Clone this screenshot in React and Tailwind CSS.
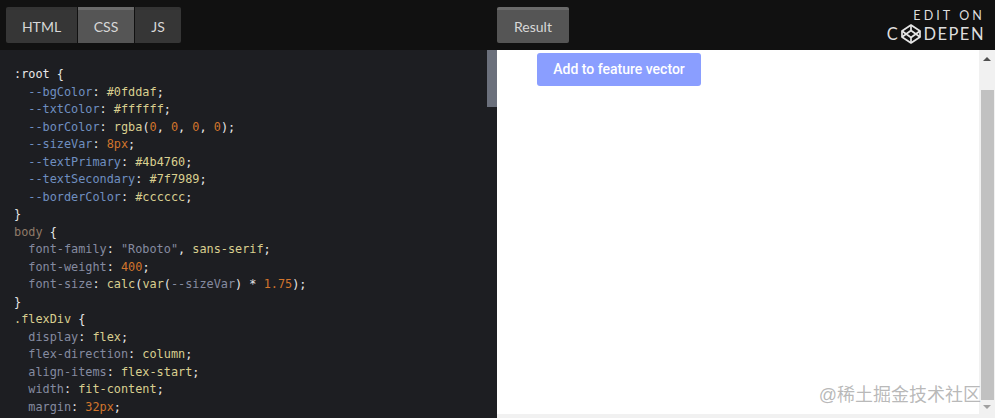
const c = {
  sel: "text-[#e8e8e8]",
  tag: "text-[#8f7a68]",
  v: "text-[#6f8fc0]",
  p: "text-[#858ba0]",
  val: "text-[#d9cf8f]",
  str: "text-[#d9cf8f]",
  num: "text-[#d2752c]",
  w: "text-[#e8e8e8]",
};

// each line is a list of [text, colour] pairs
const lines = [
  [[":root ", c.sel], ["{", c.w]],
  [["  --bgColor", c.v], [": ", c.w], ["#0fddaf", c.val], [";", c.w]],
  [["  --txtColor", c.v], [": ", c.w], ["#ffffff", c.val], [";", c.w]],
  [["  --borColor", c.v], [": ", c.w], ["rgba", c.val], ["(", c.w], ["0", c.num], [", ", c.w], ["0", c.num], [", ", c.w], ["0", c.num], [", ", c.w], ["0", c.num], [");", c.w]],
  [["  --sizeVar", c.v], [": ", c.w], ["8px", c.num], [";", c.w]],
  [["  --textPrimary", c.v], [": ", c.w], ["#4b4760", c.val], [";", c.w]],
  [["  --textSecondary", c.v], [": ", c.w], ["#7f7989", c.val], [";", c.w]],
  [["  --borderColor", c.v], [": ", c.w], ["#cccccc", c.val], [";", c.w]],
  [["}", c.w]],
  [["body ", c.tag], ["{", c.w]],
  [["  font-family", c.p], [": ", c.w], ['"Roboto"', c.p], [", ", c.w], ["sans-serif", c.val], [";", c.w]],
  [["  font-weight", c.p], [": ", c.w], ["400", c.num], [";", c.w]],
  [["  font-size", c.p], [": ", c.w], ["calc", c.val], ["(", c.w], ["var", c.val], ["(", c.w], ["--sizeVar", c.p], [") * ", c.w], ["1.75", c.num], [");", c.w]],
  [["}", c.w]],
  [[".flexDiv ", c.val], ["{", c.w]],
  [["  display", c.p], [": ", c.w], ["flex", c.val], [";", c.w]],
  [["  flex-direction", c.p], [": ", c.w], ["column", c.val], [";", c.w]],
  [["  align-items", c.p], [": ", c.w], ["flex-start", c.val], [";", c.w]],
  [["  width", c.p], [": ", c.w], ["fit-content", c.val], [";", c.w]],
  [["  margin", c.p], [": ", c.w], ["32px", c.num], [";", c.w]],
];

const tabBase =
  "flex h-9 items-center justify-center border-t-[3px] text-[14px] font-['Lato',sans-serif] text-[#d8d8d8]";

function CodepenMark() {
  return (
    <svg className="mx-[2px] shrink-0" width="20" height="20" viewBox="0 0 20 20" fill="none" stroke="#e6e6e6" strokeWidth="1.7" strokeLinejoin="round">
      <path d="M10 1 19 7V13L10 19 1 13V7Z" />
      <path d="M10 1V6.5M10 13.5V19M1 7 10 13.5 19 7M1 13 10 6.5 19 13" />
    </svg>
  );
}

export default function App() {
  return (
    <div className="flex h-[418px] w-[995px] flex-col overflow-hidden bg-[#111111]">
      <header className="flex h-[50px] shrink-0 items-start bg-[#111111] pt-[7px]">
        <div className="flex w-[497px] gap-px pl-[6px]">
          <div className={`${tabBase} w-[71px] rounded-l-[2px] border-[#333333] bg-[#363636]`}>HTML</div>
          <div className={`${tabBase} w-[56px] border-[#6a6a6a] bg-[#555555]`}>CSS</div>
          <div className={`${tabBase} w-[46px] rounded-r-[2px] border-[#333333] bg-[#363636]`}>JS</div>
        </div>
        <div className={`${tabBase} w-[72px] rounded-[2px] border-[#6a6a6a] bg-[#555555]`}>Result</div>
        <div className="ml-auto flex flex-col items-end pr-[10px] pt-px font-['Lato',sans-serif] text-[#dedede]">
          <span className="text-[12.5px] leading-[16px] tracking-[3.1px]">EDIT ON</span>
          <div className="flex items-center text-[16.5px] leading-[20px] tracking-[1.5px]">
            <span>C</span>
            <CodepenMark />
            <span>DEPEN</span>
          </div>
        </div>
      </header>

      <main className="flex min-h-0 flex-1">
        <section className="flex w-[497px] shrink-0 bg-[#1d1e22]">
          <pre className="min-w-0 flex-1 overflow-hidden pl-[14px] pt-[16px] font-['DejaVu_Sans_Mono',monospace] text-[11.85px] leading-[17.5px]">
            {lines.map((line, i) => (
              <div key={i}>
                {line.map(([text, color], j) => (
                  <span key={j} className={color}>{text}</span>
                ))}
              </div>
            ))}
          </pre>
          <div className="w-[10px] shrink-0">
            <div className="h-[57px] bg-[#6b707c]" />
          </div>
        </section>

        <section className="relative flex min-w-0 flex-1 flex-col bg-white">
          <div className="flex min-h-0 flex-1">
            <div className="flex-1 pl-[40px] pt-[3px]">
              <button className="h-[33px] w-[164px] rounded-[3px] bg-[#8a9eff] font-['Roboto',sans-serif] text-[14px] font-medium text-white">
                Add to feature vector
              </button>
            </div>
            <div className="flex w-[16px] shrink-0 flex-col items-center bg-[#f1f1f1]">
              <div className="mt-[7px] h-0 w-0 border-x-[4px] border-b-[4px] border-x-transparent border-b-[#505050]" />
              <div className="mt-[29px] w-[13px] flex-1 bg-[#c1c1c1]" />
              <div className="my-[5px] h-0 w-0 border-x-[4px] border-t-[4px] border-x-transparent border-t-[#a0a0a0]" />
            </div>
          </div>
          <div className="h-[4px] shrink-0 bg-[#f1f1f1]" />
          <span className="absolute bottom-[11px] right-[14px] font-['Liberation_Sans','Noto_Sans_CJK_SC',sans-serif] text-[18px] leading-[24px] text-[#9a9a9a]/70">
            @稀土掘金技术社区
          </span>
        </section>
      </main>
    </div>
  );
}
